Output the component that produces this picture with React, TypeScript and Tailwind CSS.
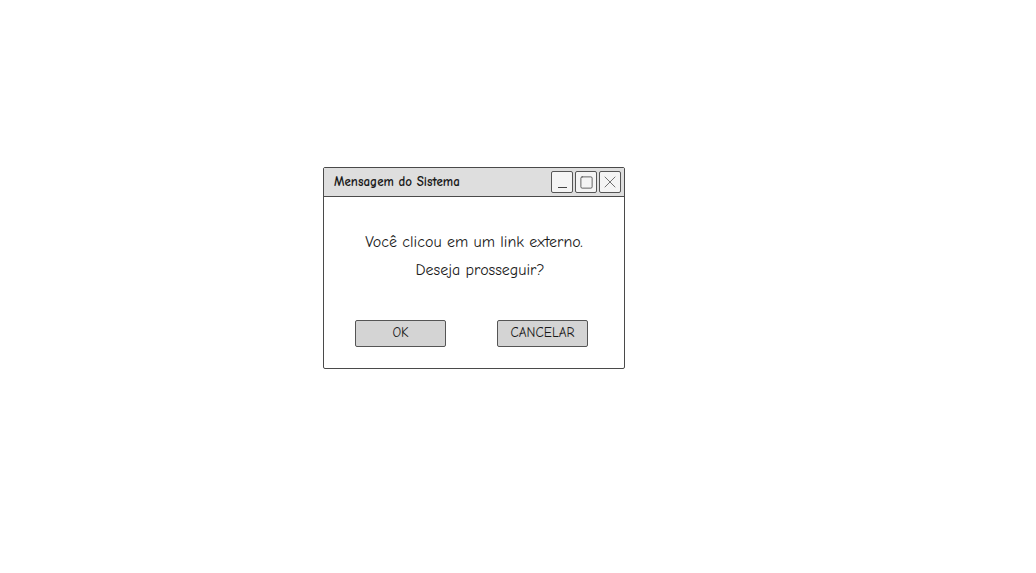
import { Square, X } from "lucide-react";

const font = { fontFamily: '"Comic Sans MS", "Comic Neue", "Open Sans", sans-serif' };

const WinButton = ({ children }: { children: React.ReactNode }) => (
  <div className="w-[22px] h-[22px] border border-[#555] rounded-[2px] bg-[#f4f4f4] flex items-center justify-center">
    {children}
  </div>
);

const App = () => {
  return (
    <div className="w-[1036px] h-[573px] bg-white pl-[323px] pt-[167px]" style={font}>
      {/* Dialog */}
      <div className="w-[302px] h-[202px] border-[1.5px] border-[#4a4a4a] rounded-[2px] flex flex-col bg-white">
        {/* Title bar */}
        <div className="h-[29px] bg-[#dedede] border-b-[1.5px] border-[#4a4a4a] flex items-center pl-[10px] pr-[3px]">
          <span className="flex-1 text-[13px] font-bold text-[#1a1a1a]">Mensagem do Sistema</span>
          <div className="flex gap-[2px]">
            <WinButton>
              <div className="w-[9px] h-[1.5px] bg-[#444] mt-[11px]" />
            </WinButton>
            <WinButton>
              <Square className="w-[15px] h-[15px] text-[#444]" strokeWidth={1.3} />
            </WinButton>
            <WinButton>
              <X className="w-[24px] h-[24px] text-[#444]" strokeWidth={0.9} />
            </WinButton>
          </div>
        </div>

        {/* Body */}
        <div className="flex flex-col items-center text-[16px] text-[#1a1a1a] pt-[31px] leading-[28px]">
          <p>Você clicou em um link externo.</p>
          <p className="pl-[12px]">Deseja prosseguir?</p>
        </div>

        {/* Actions */}
        <div className="flex justify-between pl-[31px] pr-[36px] pt-[36px]">
          <button className="w-[91px] h-[27px] bg-[#d4d4d4] border border-[#555] rounded-[2px] text-[13.5px] text-[#1a1a1a]">
            OK
          </button>
          <button className="w-[91px] h-[27px] bg-[#d4d4d4] border border-[#555] rounded-[2px] text-[13.5px] text-[#1a1a1a]">
            CANCELAR
          </button>
        </div>
      </div>
    </div>
  );
};

export default App;
